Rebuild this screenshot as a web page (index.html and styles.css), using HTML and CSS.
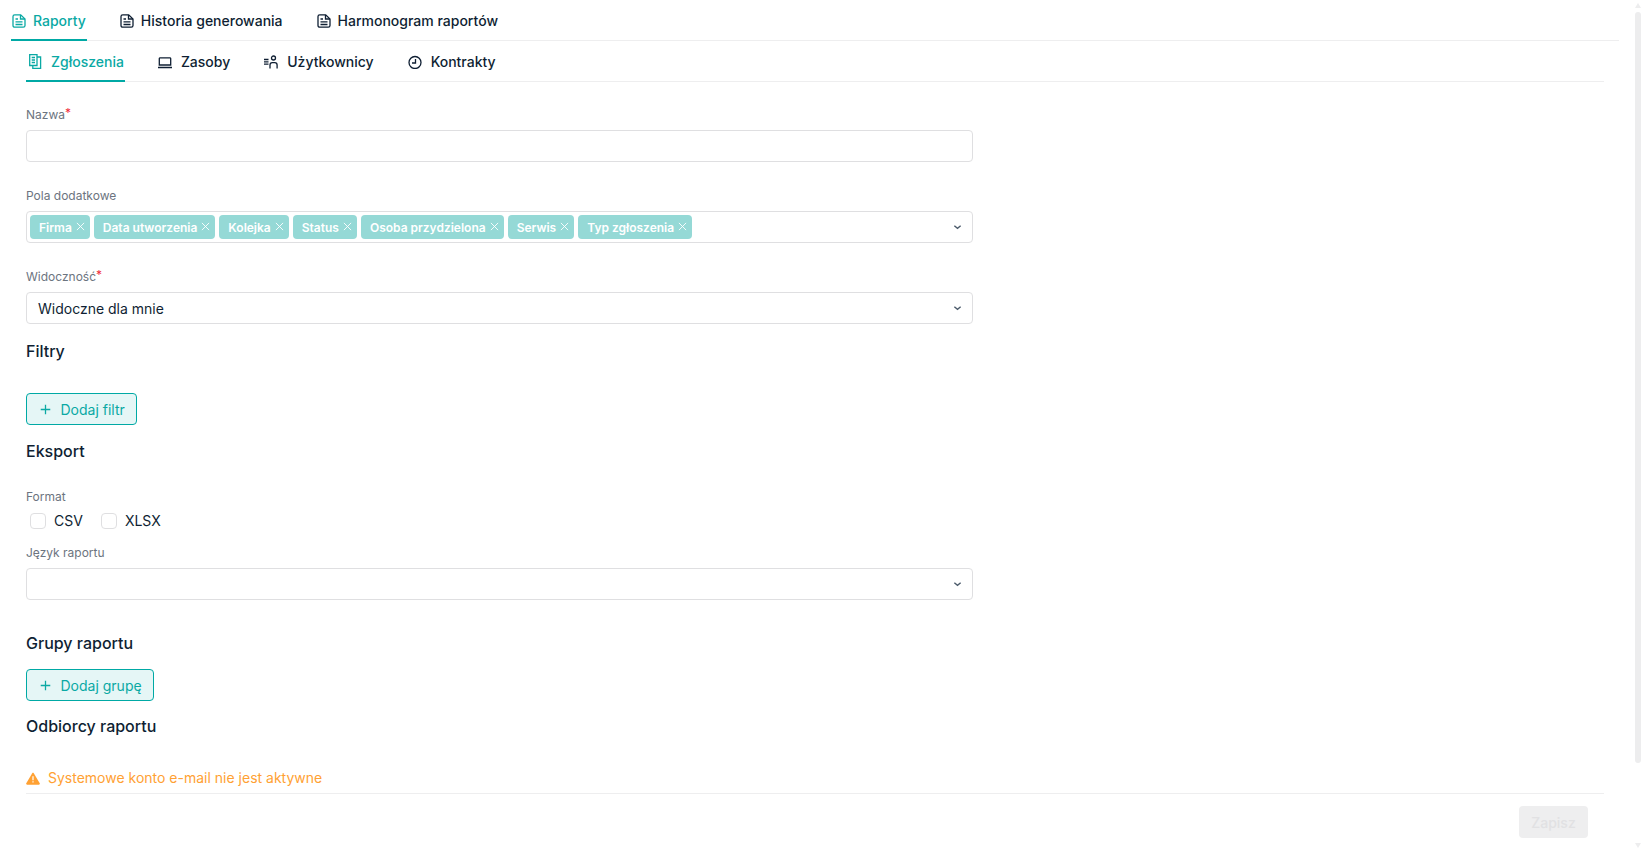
FILE: index.html
```html
<!DOCTYPE html>
<html lang="pl">
<head>
<meta charset="utf-8">
<title>Raporty</title>
<link rel="stylesheet" href="styles.css">
</head>
<body>
<div class="app">
  <main class="page">
    <nav class="tabs tabs-top">
      <a class="tab tab-active"><svg class="ico" viewBox="0 0 14 14"><path d="M1 2.500C1 1.500 1.700.8 2.700.8h6L13 5v6.500c0 1-.7 1.700-1.700 1.700H2.700c-1 0-1.700-.7-1.700-1.700z"/><path d="M8.500 1v4H13M3.500 5H6M3.500 7.800h7M3.500 10.500h7"/></svg>Raporty</a>
      <a class="tab"><svg class="ico" viewBox="0 0 14 14"><path d="M1 2.500C1 1.500 1.700.8 2.700.8h6L13 5v6.500c0 1-.7 1.700-1.700 1.700H2.700c-1 0-1.700-.7-1.700-1.700z"/><path d="M8.500 1v4H13M3.500 5H6M3.500 7.800h7M3.500 10.500h7"/></svg>Historia generowania</a>
      <a class="tab"><svg class="ico" viewBox="0 0 14 14"><path d="M1 2.500C1 1.500 1.700.8 2.700.8h6L13 5v6.500c0 1-.7 1.700-1.700 1.700H2.700c-1 0-1.700-.7-1.700-1.700z"/><path d="M8.500 1v4H13M3.500 5H6M3.500 7.800h7M3.500 10.500h7"/></svg>Harmonogram raportów</a>
    </nav>
    <div class="content">
      <nav class="tabs tabs-sub">
        <a class="tab tab-active"><svg class="ico ico-tall" viewBox="0 0 14 15"><path d="M1.700.7h7.300v10.800H1.700z"/><path d="M9 3h3.600v11.300H4.800v-2.800M3.700 3.500h3.300M3.700 6h3.300M3.700 8.500h3.300"/></svg>Zgłoszenia</a>
        <a class="tab"><svg class="ico" viewBox="0 0 14 14"><path d="M2.200 2.800h9.600c.5 0 .9.3.9.8V10H1.300V3.600c0-.5.4-.8.9-.8zM0 12.500h14"/></svg>Zasoby</a>
        <a class="tab"><svg class="ico" viewBox="0 0 14 14"><circle cx="9.500" cy="3" r="2"/><path d="M6 13.500V10c0-1.500 1-2.300 2.300-2.300h2.500c1.300 0 2.300.8 2.300 2.300v3.500M0 4.500h4.500M0 6.800h4.500M0 9.100h4.500"/></svg>Użytkownicy</a>
        <a class="tab"><svg class="ico" viewBox="0 0 14 14"><circle cx="7" cy="7.500" r="6"/><path d="M7.500 4v4H4"/></svg>Kontrakty</a>
      </nav>
      <form class="form">
        <div class="field field-name">
          <label class="label">Nazwa<span class="req">*</span></label>
          <div class="input"></div>
        </div>
        <div class="field field-extra">
          <label class="label">Pola dodatkowe</label>
          <div class="input input-tags">
            <span class="tag">Firma<svg class="tag-x" viewBox="0 0 10 10"><path d="M1 1l8 8M9 1l-8 8"/></svg></span>
            <span class="tag">Data utworzenia<svg class="tag-x" viewBox="0 0 10 10"><path d="M1 1l8 8M9 1l-8 8"/></svg></span>
            <span class="tag">Kolejka<svg class="tag-x" viewBox="0 0 10 10"><path d="M1 1l8 8M9 1l-8 8"/></svg></span>
            <span class="tag">Status<svg class="tag-x" viewBox="0 0 10 10"><path d="M1 1l8 8M9 1l-8 8"/></svg></span>
            <span class="tag">Osoba przydzielona<svg class="tag-x" viewBox="0 0 10 10"><path d="M1 1l8 8M9 1l-8 8"/></svg></span>
            <span class="tag">Serwis<svg class="tag-x" viewBox="0 0 10 10"><path d="M1 1l8 8M9 1l-8 8"/></svg></span>
            <span class="tag">Typ zgłoszenia<svg class="tag-x" viewBox="0 0 10 10"><path d="M1 1l8 8M9 1l-8 8"/></svg></span>
            <svg class="chev" viewBox="0 0 10 6"><path d="M1.500 1.500L5 4.500l3.500-3"/></svg>
          </div>
        </div>
        <div class="field field-vis">
          <label class="label">Widoczność<span class="req">*</span></label>
          <div class="input input-select">Widoczne dla mnie<svg class="chev" viewBox="0 0 10 6"><path d="M1.500 1.500L5 4.500l3.500-3"/></svg></div>
        </div>
        <h2 class="heading heading-filters">Filtry</h2>
        <button type="button" class="add-btn add-filter"><svg class="plus" viewBox="0 0 12 12"><path d="M6 .8v10.400M.8 6h10.400"/></svg>Dodaj filtr</button>
        <h2 class="heading heading-export">Eksport</h2>
        <div class="field field-format">
          <label class="label">Format</label>
          <div class="checks">
            <span class="check"><i class="box"></i>CSV</span>
            <span class="check"><i class="box"></i>XLSX</span>
          </div>
        </div>
        <div class="field field-lang">
          <label class="label">Język raportu</label>
          <div class="input input-select"><svg class="chev" viewBox="0 0 10 6"><path d="M1.500 1.500L5 4.500l3.500-3"/></svg></div>
        </div>
        <h2 class="heading heading-groups">Grupy raportu</h2>
        <button type="button" class="add-btn add-group"><svg class="plus" viewBox="0 0 12 12"><path d="M6 .8v10.400M.8 6h10.400"/></svg>Dodaj grupę</button>
        <h2 class="heading heading-recipients">Odbiorcy raportu</h2>
        <p class="warning"><svg class="warn-ico" viewBox="0 0 16 14"><path d="M8 .5c.4 0 .7.2.9.5l6.800 11.500c.4.7-.1 1.500-.9 1.500H1.200c-.8 0-1.300-.8-.9-1.500L7.100 1c.2-.3.5-.5.9-.5z"/><path class="warn-mark" d="M7.300 4.500h1.400V9H7.300zM7.300 10h1.400v1.500H7.300z"/></svg>Systemowe konto e-mail nie jest aktywne</p>
      </form>
      <footer class="footer">
        <button type="button" class="save" disabled>Zapisz</button>
      </footer>
    </div>
  </main>
  <div class="scrollbar">
    <span class="arrow arrow-up"></span>
    <span class="thumb"></span>
    <span class="arrow arrow-down"></span>
  </div>
</div>
</body>
</html>
```
FILE: styles.css
```css
* { box-sizing: border-box; }
html, body { margin: 0; height: 100%; overflow: hidden; background: #fff; }
body { font-family: Inter, "Noto Sans", sans-serif; font-size: 14px; color: #0f1f33; }

.app { display: flex; height: 848px; }
.page { flex: 1; min-width: 0; padding: 0 15px 0 11px; }

.tabs { display: flex; border-bottom: 1px solid #eeeeef; }
.tabs-top { height: 41px; gap: 32px; }
.tabs-sub { height: 41px; gap: 31px; }
.tab { display: flex; align-items: center; font-weight: 500; color: #0f1f33; margin-bottom: -1px; border-bottom: 2px solid transparent; }
.tabs-top .tab { gap: 7px; padding: 2px 1px 0 1px; }
.tabs-sub .tab { gap: 9px; padding: 2px 1px 0 2px; }
.tab-active { color: #0aa9a4; border-bottom-color: #00a9a5; }
.ico { flex: none; width: 14px; height: 14px; fill: none; stroke: currentColor; stroke-width: 1.3; }
.ico-tall { height: 15px; }

.content { padding: 0 15px; }
.form { height: 711px; display: flex; flex-direction: column; align-items: flex-start; }
.field { width: 947px; }
.label { display: block; font-size: 12px; line-height: 16px; color: #6c7480; }
.req { color: #ef2b3a; position: relative; top: -2px; }
.input { position: relative; display: flex; align-items: center; width: 100%; height: 32px; margin-top: 7px; border: 1px solid #dfdfe1; border-radius: 4px; background: #fff; }
.input-select { padding-left: 11px; }
.input-tags { gap: 4px; padding-left: 3px; }
.field-name { margin-top: 25px; }
.field-extra { margin-top: 26px; }
.field-vis { margin-top: 26px; }

.tag { display: flex; align-items: center; gap: 4px; height: 24px; padding: 0 5px 0 9px; border-radius: 4px; background: #95d9d6; color: #fff; font-size: 12px; font-weight: 600; }
.tag-x { width: 9px; height: 9px; fill: none; stroke: #fff; stroke-width: 1; margin-top: -2px; }
.chev { position: absolute; right: 10px; top: 50%; width: 9px; height: 6px; margin-top: -3px; fill: none; stroke: #4c5b6b; stroke-width: 1.5; }

.heading { margin: 0; font-size: 16px; line-height: 20px; font-weight: 500; color: #0f1f33; }
.heading-filters { margin-top: 17px; }
.heading-export { margin-top: 16px; }
.heading-groups { margin-top: 33px; }
.heading-recipients { margin-top: 15px; }

.add-btn { display: flex; align-items: center; gap: 9.5px; height: 32px; padding: 0 11.5px 0 13px; border: 1px solid #00a9a5; border-radius: 4px; background: #e5f6f6; color: #0aa9a4; font: 400 14px Inter, "Noto Sans", sans-serif; }
.plus { width: 11px; height: 11px; fill: none; stroke: currentColor; stroke-width: 1.4; }
.add-filter { margin-top: 32px; }
.add-group { margin-top: 16px; }

.field-format { margin-top: 28px; }
.checks { display: flex; gap: 18px; padding-left: 4px; margin-top: 8px; }
.check { display: flex; align-items: center; gap: 8px; line-height: 16px; }
.box { width: 16px; height: 16px; border: 1px solid #dfdfe1; border-radius: 4px; background: #fff; }
.field-lang { margin-top: 16px; }

.warning { display: flex; align-items: center; gap: 8px; margin: 32px 0 0; line-height: 20px; color: #ffa133; }
.warn-ico { width: 14px; height: 13px; fill: #ffa133; }
.warn-mark { fill: #fff; }

.footer { display: flex; justify-content: flex-end; padding: 12px 16px 0 0; border-top: 1px solid #eeeeef; }
.save { width: 69px; height: 32px; border: 0; border-radius: 4px; background: #eeeeef; color: #e1e1e3; font: 500 14px Inter, "Noto Sans", sans-serif; }

.scrollbar { flex: none; display: flex; flex-direction: column; align-items: center; width: 8px; margin-right: 2px; }
.thumb { width: 6px; height: 751px; margin: 4px 0 auto; border-radius: 3px; background: #ededee; }
.arrow { width: 0; height: 0; border-left: 3px solid transparent; border-right: 3px solid transparent; }
.arrow-up { margin-top: 3px; border-bottom: 5px solid #ededee; }
.arrow-down { border-top: 5px solid #ededee; }
```
